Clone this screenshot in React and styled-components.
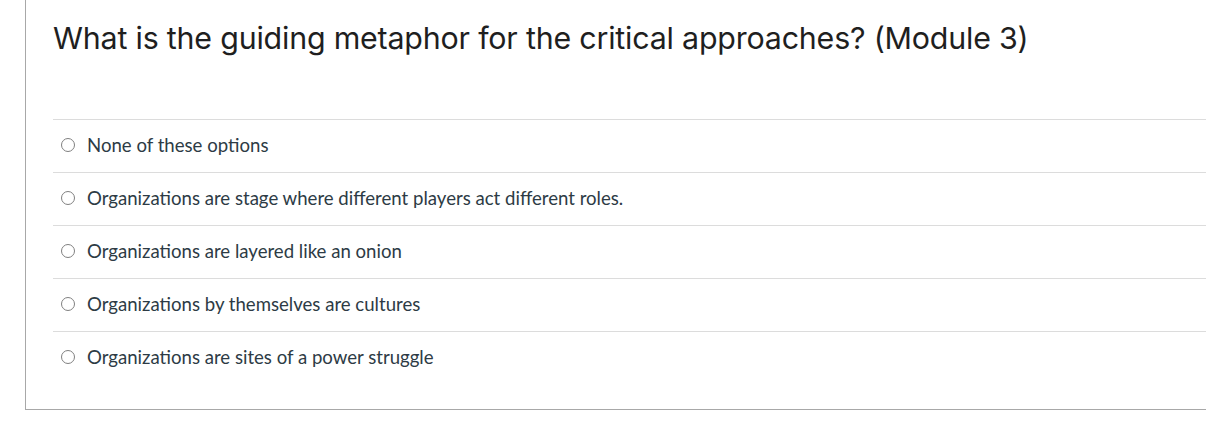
import styled, { createGlobalStyle } from "styled-components";

const GlobalStyle = createGlobalStyle`
    body {
        margin: 0;
        background: #fff;
    }
`;

const Panel = styled.div`
    margin-left: 25px;
    height: 410px;
    border-left: 1px solid #a8a8a8;
    border-bottom: 1px solid #a8a8a8;
    padding-left: 27px;
    box-sizing: border-box;
`;

const Header = styled.div`
    height: 119px;
    padding-top: 18px;
    box-sizing: border-box;
`;

const Title = styled.h1`
    margin: 0;
    font-family: Inter, "Open Sans", sans-serif;
    font-weight: 400;
    font-size: 30.4px;
    line-height: 40px;
    color: #1f1f1f;
    letter-spacing: -0.2px;
`;

const Answers = styled.div`
    display: flex;
    flex-direction: column;
`;

const Answer = styled.label`
    display: flex;
    align-items: center;
    height: 53px;
    border-top: 1px solid #dcdcdc;
    box-sizing: border-box;
    padding: 0 0 3px 8px;
    gap: 12px;
    font-family: Lato, "Open Sans", sans-serif;
    font-size: 18.6px;
    color: #2d3b45;
`;

const Radio = styled.span`
    width: 14px;
    height: 14px;
    border: 1px solid #808080;
    border-radius: 50%;
    box-sizing: border-box;
    flex-shrink: 0;
`;

const options = [
    "None of these options",
    "Organizations are stage where different players act different roles.",
    "Organizations are layered like an onion",
    "Organizations by themselves are cultures",
    "Organizations are sites of a power struggle",
];

export default function App() {
    return (
        <>
            <GlobalStyle />
            <Panel>
                <Header>
                    <Title>
                        What is the guiding metaphor for the critical approaches? (Module 3)
                    </Title>
                </Header>
                <Answers>
                    {options.map((text) => (
                        <Answer key={text}>
                            <Radio />
                            {text}
                        </Answer>
                    ))}
                </Answers>
            </Panel>
        </>
    );
}
